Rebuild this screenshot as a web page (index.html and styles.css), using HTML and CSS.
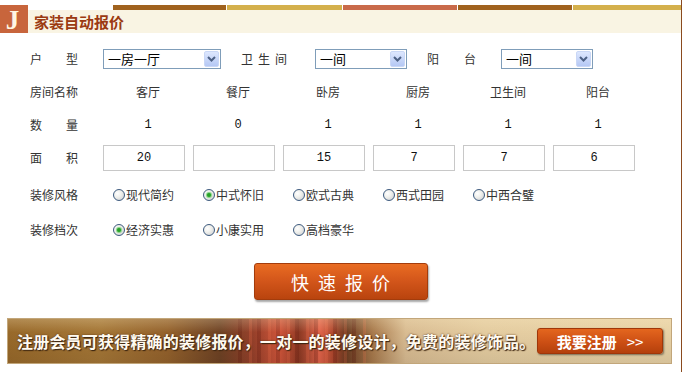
FILE: index.html
```html
<!DOCTYPE html>
<html lang="zh-CN">
<head>
    <meta charset="UTF-8">
    <title>家装自动报价</title>
    <link rel="stylesheet" href="styles.css">
</head>
<body>
<div class="box">

    <!-- 标题 -->
    <div class="box-head">
        <div class="head-logo">J</div>
        <div class="head-main">
            <div class="head-stripe">
                <span class="s-brown s1"></span>
                <span class="s-gold s2"></span>
                <span class="s-red s3"></span>
                <span class="s-brown s4"></span>
                <span class="s-gold s5"></span>
            </div>
            <h3 class="head-title">家装自动报价</h3>
        </div>
    </div>

    <!-- 户型 -->
    <div class="row row-type">
        <span class="lbl"><i>户</i><i>型</i></span>
        <div class="sel sel-lg">
            <span>一房一厅</span>
            <b class="sel-btn"><svg width="9" height="6" viewBox="0 0 9 6"><path d="M1 1 L4.5 4.5 L8 1" fill="none" stroke="#4d6185" stroke-width="2"/></svg></b>
        </div>
        <span class="lbl lbl-bath"><i>卫</i><i>生</i><i>间</i></span>
        <div class="sel">
            <span>一间</span>
            <b class="sel-btn"><svg width="9" height="6" viewBox="0 0 9 6"><path d="M1 1 L4.5 4.5 L8 1" fill="none" stroke="#4d6185" stroke-width="2"/></svg></b>
        </div>
        <span class="lbl lbl-balc"><i>阳</i><i>台</i></span>
        <div class="sel">
            <span>一间</span>
            <b class="sel-btn"><svg width="9" height="6" viewBox="0 0 9 6"><path d="M1 1 L4.5 4.5 L8 1" fill="none" stroke="#4d6185" stroke-width="2"/></svg></b>
        </div>
    </div>

    <!-- 房间名称 -->
    <div class="row row-names">
        <span class="lbl">房间名称</span>
        <span class="cell">客厅</span>
        <span class="cell">餐厅</span>
        <span class="cell">卧房</span>
        <span class="cell">厨房</span>
        <span class="cell">卫生间</span>
        <span class="cell">阳台</span>
    </div>

    <!-- 数量 -->
    <div class="row row-count">
        <span class="lbl"><i>数</i><i>量</i></span>
        <span class="cell num">1</span>
        <span class="cell num">0</span>
        <span class="cell num">1</span>
        <span class="cell num">1</span>
        <span class="cell num">1</span>
        <span class="cell num">1</span>
    </div>

    <!-- 面积 -->
    <div class="row row-area">
        <span class="lbl"><i>面</i><i>积</i></span>
        <span class="cell"><input type="text" value="20"></span>
        <span class="cell"><input type="text" value=""></span>
        <span class="cell"><input type="text" value="15"></span>
        <span class="cell"><input type="text" value="7"></span>
        <span class="cell"><input type="text" value="7"></span>
        <span class="cell"><input type="text" value="6"></span>
    </div>

    <!-- 装修风格 -->
    <div class="row row-style">
        <span class="lbl">装修风格</span>
        <label class="cell opt"><span class="radio"></span>现代简约</label>
        <label class="cell opt"><span class="radio on"></span>中式怀旧</label>
        <label class="cell opt"><span class="radio"></span>欧式古典</label>
        <label class="cell opt"><span class="radio"></span>西式田园</label>
        <label class="cell opt"><span class="radio"></span>中西合璧</label>
    </div>

    <!-- 装修档次 -->
    <div class="row row-grade">
        <span class="lbl">装修档次</span>
        <label class="cell opt"><span class="radio on"></span>经济实惠</label>
        <label class="cell opt"><span class="radio"></span>小康实用</label>
        <label class="cell opt"><span class="radio"></span>高档豪华</label>
    </div>

    <button class="btn-quote">快速报价</button>

    <!-- 注册横幅 -->
    <div class="banner">
        <span class="banner-text">注册会员可获得精确的装修报价，一对一的装修设计，免费的装修饰品。</span>
        <button class="btn-reg">我要注册<em>&gt;&gt;</em></button>
    </div>

</div>
</body>
</html>
```

FILE: styles.css
```css
body {
    margin: 0;
    background: #fff;
    font-family: "Noto Sans CJK SC", sans-serif;
    font-size: 12px;
    color: #333;
}

.box {
    width: 681px;
    height: 372px;
    border-right: 1px solid #8a4a1e;
    box-sizing: content-box;
}

/* 标题 */
.box-head {
    display: flex;
    height: 33px;
}

.head-logo {
    width: 28px;
    height: 28px;
    margin-top: 5px;
    background: #c8653c;
    color: #fff6e4;
    font-family: "Liberation Serif", serif;
    font-weight: bold;
    font-size: 27px;
    line-height: 31px;
    text-align: center;
    text-indent: -3px;
}

.head-main {
    flex: 1;
    display: flex;
    flex-direction: column;
    padding-top: 5px;
}

.head-stripe {
    display: flex;
    gap: 1px;
    height: 5px;
    padding-left: 85px;
}

.head-stripe span { display: block; height: 5px; }
.s1 { width: 113px; }
.s2 { width: 115px; }
.s3 { width: 114px; }
.s4 { width: 114px; }
.s5 { flex: 1; }
.s-brown { background: #a0621e; }
.s-gold { background: #d4b04c; }
.s-red { background: #c96a4a; }

.head-title {
    flex: 1;
    margin: 0;
    padding-left: 6px;
    background: #f9f4e3;
    color: #9b3a12;
    font-size: 15px;
    font-weight: bold;
    line-height: 23px;
}

/* 表单行 */
.row {
    display: flex;
    align-items: center;
    height: 22px;
    padding-left: 30px;
    line-height: 22px;
}

.row-type { margin-top: 15px; }
.row-names { margin-top: 11px; }
.row-count { margin-top: 11px; }
.row-area { margin-top: 9px; height: 26px; }
.row-style { margin-top: 13px; }
.row-grade { margin-top: 13px; }

.lbl {
    display: flex;
    justify-content: space-between;
    width: 48px;
    margin-right: 25px;
    flex-shrink: 0;
}

.lbl i { font-style: normal; }

.row-type .lbl-bath {
    width: 46px;
    margin: 0 28px 0 20px;
}

.row-type .lbl-balc {
    width: 49px;
    margin: 0 25px 0 20px;
}

.cell {
    width: 90px;
    flex-shrink: 0;
    text-align: center;
}

.num {
    font-family: "Liberation Mono", monospace;
    color: #111;
}

/* 下拉框 */
.sel {
    display: flex;
    align-items: center;
    justify-content: space-between;
    width: 92px;
    height: 20px;
    box-sizing: border-box;
    border: 1px solid #7f9db9;
    padding: 0 1px 0 4px;
    color: #000;
    font-size: 13px;
    background: #fff;
}

.sel-lg { width: 118px; }

.sel-btn {
    display: flex;
    align-items: center;
    justify-content: center;
    width: 15px;
    height: 16px;
    box-sizing: border-box;
    border: 1px solid #c9d7f6;
    border-radius: 2px;
    background: linear-gradient(#dde7fe, #b5c8f4);
}

/* 面积输入 */
.row-area input {
    display: block;
    width: 82px;
    height: 26px;
    box-sizing: border-box;
    border: 1px solid #c8c8c8;
    padding: 0;
    font-family: "Liberation Mono", monospace;
    font-size: 12px;
    color: #111;
    text-align: center;
    outline: none;
}

/* 单选 */
.opt {
    display: flex;
    align-items: center;
    padding-left: 10px;
    box-sizing: border-box;
    text-align: left;
}

.radio {
    width: 12px;
    height: 12px;
    margin-right: 1px;
    box-sizing: border-box;
    border: 1px solid #3d5a7e;
    border-radius: 50%;
    background: radial-gradient(circle at 35% 35%, #fff 0, #f0f0ec 40%, #c8cbd0 100%);
    display: flex;
    align-items: center;
    justify-content: center;
}

.radio.on::after {
    content: "";
    width: 4px;
    height: 4px;
    border-radius: 50%;
    background: #27a027;
    box-shadow: 0 0 1px 1px #7cd07c;
}

/* 快速报价 */
.btn-quote {
    display: block;
    width: 174px;
    height: 37px;
    margin: 22px auto 0;
    padding: 0 0 0 9px;
    border: 1px solid #a33c0c;
    border-radius: 3px;
    background: linear-gradient(#e96c22, #d2551a 50%, #b9440e);
    box-shadow: 1px 2px 2px rgba(0, 0, 0, 0.35);
    color: #fff;
    font-family: "Noto Sans CJK SC", sans-serif;
    font-size: 18px;
    letter-spacing: 9px;
    cursor: pointer;
}

/* 注册横幅 */
.banner {
    display: flex;
    align-items: center;
    justify-content: space-between;
    height: 46px;
    margin: 18px 9px 0 7px;
    padding: 0 8px 0 9px;
    box-sizing: border-box;
    border: 1px solid #c2a67a;
    background:
        linear-gradient(rgba(255, 240, 200, 0.25), rgba(0, 0, 0, 0) 30%, rgba(0, 0, 0, 0.08)),
        repeating-linear-gradient(90deg, rgba(90, 20, 10, 0.25) 0 4px, rgba(0, 0, 0, 0) 4px 11px, rgba(255, 120, 80, 0.2) 11px 14px, rgba(0, 0, 0, 0) 14px 19px) 230px 0 / 130px 100% no-repeat,
        linear-gradient(90deg, #98692a 0%, #a47636 14%, #94622c 24%, #6e4224 32%, #96402a 37%, #d0553a 41%, #8e3a24 44%, #e2644a 47%, #b0482e 49%, #6c3c22 51%, #a87a4c 55%, #d9bc92 60%, #e4cca0 72%, #e8d2a6 100%);
}

.banner-text {
    color: #fffaf0;
    font-size: 16px;
    font-weight: bold;
    letter-spacing: 0.2px;
    text-shadow: 1px 1px 1px #3a2410, 0 0 2px #5a3416;
}

.btn-reg {
    width: 126px;
    height: 26px;
    padding: 0;
    border: 1px solid #a03608;
    border-radius: 3px;
    background: linear-gradient(#e4661e, #cc4f14 55%, #b4400c);
    box-shadow: 1px 1px 2px rgba(0, 0, 0, 0.45);
    color: #fff;
    font-family: "Noto Sans CJK SC", sans-serif;
    font-size: 15px;
    font-weight: bold;
    cursor: pointer;
}

.btn-reg em {
    font-style: normal;
    font-weight: normal;
    margin-left: 10px;
}
```
